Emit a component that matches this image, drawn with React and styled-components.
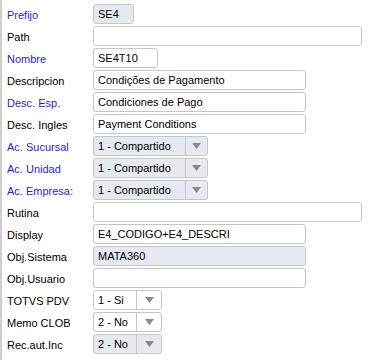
import React from "react";
import styled, { createGlobalStyle } from "styled-components";

const GlobalStyle = createGlobalStyle`
  html, body {
    margin: 0;
    padding: 0;
    background: #fff;
  }
  body {
    font-family: "Liberation Sans", Arial, sans-serif;
  }
`;

const fields = [
  { label: "Prefijo", value: "SE4", required: true, width: 41, disabled: true },
  { label: "Path", value: "", width: 269 },
  { label: "Nombre", value: "SE4T10", required: true, width: 65 },
  { label: "Descripcion", value: "Condições de Pagamento", width: 213 },
  { label: "Desc. Esp.", value: "Condiciones de Pago", required: true, width: 213 },
  { label: "Desc. Ingles", value: "Payment Conditions", width: 213 },
  { label: "Ac. Sucursal", value: "1 - Compartido", required: true, combo: 92, width: 115, disabled: true },
  { label: "Ac. Unidad", value: "1 - Compartido", required: true, combo: 92, width: 115, disabled: true },
  { label: "Ac. Empresa:", value: "1 - Compartido", required: true, combo: 92, width: 115, disabled: true },
  { label: "Rutina", value: "", width: 269 },
  { label: "Display", value: "E4_CODIGO+E4_DESCRI", width: 213 },
  { label: "Obj.Sistema", value: "MATA360", width: 213, disabled: true },
  { label: "Obj.Usuario", value: "", width: 213 },
  { label: "TOTVS PDV", value: "1 - Si", combo: 43, width: 69 },
  { label: "Memo CLOB", value: "2 - No", combo: 43, width: 69 },
  { label: "Rec.aut.Inc", value: "2 - No", combo: 43, width: 69, disabled: true },
];

const Panel = styled.div`
  width: 370px;
  height: 360px;
  box-sizing: border-box;
  border-left: 2px solid #cfcfcf;
  padding: 4px 0 0 5px;
  display: grid;
  grid-template-columns: 86px 1fr;
  grid-auto-rows: 20px;
  row-gap: 2px;
  font-size: 11px;
  color: #000;
`;

const Label = styled.div`
  display: flex;
  align-items: center;
  padding-top: 1px;
  color: ${({ $required }) => ($required ? "#1c1cf0" : "#000")};
  white-space: nowrap;
`;

const Box = styled.div`
  width: ${({ $width }) => $width}px;
  height: 20px;
  box-sizing: border-box;
  border: 1px solid #c6c6c6;
  border-radius: 3px;
  background: ${({ $disabled }) => ($disabled ? "#e6e9f0" : "#fff")};
  display: flex;
  align-items: center;
  overflow: hidden;
`;

const Value = styled.span`
  flex: 1;
  padding-left: 4px;
  white-space: nowrap;
  overflow: hidden;
`;

const ComboText = styled.span`
  width: ${({ $width }) => $width}px;
  box-sizing: border-box;
  padding-left: 4px;
  height: 100%;
  display: flex;
  align-items: center;
  border-right: 1px solid #c6c6c6;
  white-space: nowrap;
`;

const Arrow = styled.span`
  flex: 1;
  display: flex;
  align-items: center;
  justify-content: center;
`;

const Caret = () => (
  <svg width="9" height="6" viewBox="0 0 9 6">
    <path d="M0 0 L9 0 L4.5 6 Z" fill="#8a8a8a" />
  </svg>
);

export default function App() {
  return (
    <>
      <GlobalStyle />
      <Panel>
        {fields.map((f) => (
          <React.Fragment key={f.label}>
            <Label $required={f.required}>{f.label}</Label>
            <Box $width={f.width} $disabled={f.disabled}>
              {f.combo ? (
                <>
                  <ComboText $width={f.combo}>{f.value}</ComboText>
                  <Arrow>
                    <Caret />
                  </Arrow>
                </>
              ) : (
                <Value>{f.value}</Value>
              )}
            </Box>
          </React.Fragment>
        ))}
      </Panel>
    </>
  );
}
